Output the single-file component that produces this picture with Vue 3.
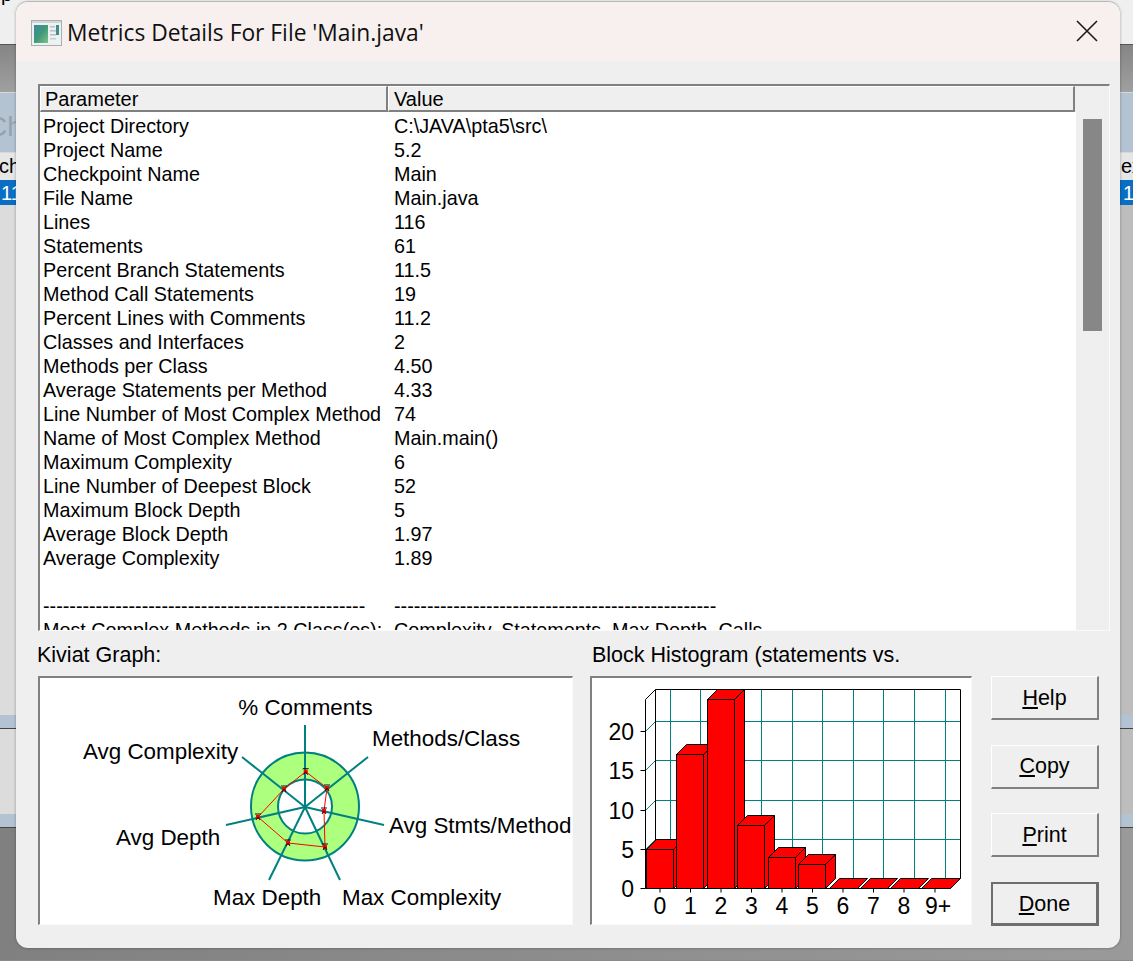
<script setup>
const rows = [
  ['Project Directory', 'C:\\JAVA\\pta5\\src\\'],
  ['Project Name', '5.2'],
  ['Checkpoint Name', 'Main'],
  ['File Name', 'Main.java'],
  ['Lines', '116'],
  ['Statements', '61'],
  ['Percent Branch Statements', '11.5'],
  ['Method Call Statements', '19'],
  ['Percent Lines with Comments', '11.2'],
  ['Classes and Interfaces', '2'],
  ['Methods per Class', '4.50'],
  ['Average Statements per Method', '4.33'],
  ['Line Number of Most Complex Method', '74'],
  ['Name of Most Complex Method', 'Main.main()'],
  ['Maximum Complexity', '6'],
  ['Line Number of Deepest Block', '52'],
  ['Maximum Block Depth', '5'],
  ['Average Block Depth', '1.97'],
  ['Average Complexity', '1.89'],
  ['\u00a0', '\u00a0'],
  ['-------------------------------------------------', '-------------------------------------------------'],
  ['Most Complex Methods in 2 Class(es):', 'Complexity, Statements, Max Depth, Calls'],
]
const stripes = [
  { h: 44, c: '#efefef' }, { h: 1, c: '#555' }, { h: 47, c: 'linear-gradient(#858585, #a0a0a0)' }, { h: 1, c: '#d8d8d8' },
  { h: 59, c: '#b4c3d2' }, { h: 1, c: '#d8d8d8' }, { h: 27, c: '#e6e6e6' },
  { h: 25, c: '#0a6fc2' }, { h: 510, c: 'linear-gradient(90deg, #dcdcdc, #bdbdbd)' }, { h: 13, c: '#b4c3d2' }, { h: 1, c: '#444' },
  { h: 85, c: 'linear-gradient(90deg, #dcdcdc, #bdbdbd)' }, { h: 13, c: '#b4c3d2' }, { h: 1, c: '#444' }, { h: 132, c: 'linear-gradient(90deg, #808080, #9a9a9a)' },
]
const center = [305, 807]
const spokes = [[305, 725], [368, 757], [384, 825], [340, 880], [269, 880], [226, 825], [242, 757]]
const poly = [[305.7, 771.7], [327, 788], [324, 811], [325, 847], [288, 843], [258, 817], [284, 789]]
const polyPts = poly.map(p => p.join(',')).join(' ')
const kLabels = [
  { t: '% Comments', x: 305.5, y: 715, a: 'middle' },
  { t: 'Methods/Class', x: 372, y: 746, a: 'start' },
  { t: 'Avg Stmts/Method', x: 389, y: 833, a: 'start' },
  { t: 'Max Complexity', x: 342, y: 905, a: 'start' },
  { t: 'Max Depth', x: 213, y: 905, a: 'start' },
  { t: 'Avg Depth', x: 116, y: 845, a: 'start' },
  { t: 'Avg Complexity', x: 83, y: 759, a: 'start' },
]
const gridX = [670.5, 700.5, 731, 761.5, 792.5, 822.5, 853.5, 883.5, 914.5, 945.5]
const gridY = [721.5, 760.5, 800.5, 839.5]
const yAxis = [
  { t: '20', y: 731.5 }, { t: '15', y: 770.5 }, { t: '10', y: 810.5 }, { t: '5', y: 849.5 }, { t: '0', y: 888.5 },
]
const bars = [
  [646.5, 673.5, 849.5], [676.5, 703.5, 754.5], [707.5, 734.5, 699.5], [737.5, 764.5, 825.5],
  [768.5, 795.5, 857.5], [798.5, 825.5, 864.5],
]
const flats = [[829.5, 857.5], [860.5, 887.5], [890.5, 918.5], [921.5, 950.5]]
const xAxis = [
  { t: '0', x: 660 }, { t: '1', x: 690.5 }, { t: '2', x: 721 }, { t: '3', x: 751.5 }, { t: '4', x: 782 },
  { t: '5', x: 812.5 }, { t: '6', x: 843 }, { t: '7', x: 873.5 }, { t: '8', x: 904 }, { t: '9+', x: 938 },
]
const ticks = [660, 690.5, 721, 751.5, 782, 812.5, 843, 873.5, 904, 935]
const buttons = [
  { k: 'H', r: 'elp' }, { k: 'C', r: 'opy' }, { k: 'P', r: 'rint' }, { k: 'D', r: 'one', def: true },
]
</script>

<template>
  <div class="desktop">
    <div class="backdrop">
      <div v-for="(s, i) in stripes" :key="i" :style="{ height: s.h + 'px', background: s.c }"></div>
    </div>
    <span class="peek top-p">p</span>
    <span class="peek ch-big">Ch</span>
    <span class="peek ch-small">ch</span>
    <span class="peek one-l">11</span>
    <span class="peek ex">ex</span>
    <span class="peek one-r">1</span>

    <section class="dialog">
      <header class="titlebar">
        <svg class="app-icon" width="31" height="26" viewBox="0 0 31 26">
          <defs>
            <linearGradient id="ig" x1="0" y1="0" x2="1" y2="1">
              <stop offset="0" stop-color="#3d86a6" />
              <stop offset="0.5" stop-color="#3f9a78" />
              <stop offset="1" stop-color="#7fc08c" />
            </linearGradient>
          </defs>
          <rect x="0.5" y="0.5" width="30" height="25" fill="#eef1f1" stroke="#a6b0b0" />
          <rect x="1" y="1" width="29" height="2" fill="#cfd6d6" />
          <rect x="3" y="5" width="14" height="18" fill="url(#ig)" />
          <rect x="19" y="6" width="5" height="1.5" fill="#b8c0c0" />
          <rect x="19" y="10" width="6" height="1.5" fill="#b8c0c0" />
          <rect x="19" y="14" width="6" height="1.5" fill="#b8c0c0" />
          <rect x="19" y="18" width="6" height="1.5" fill="#c8d0d0" />
          <rect x="25" y="5" width="3" height="10" fill="#3f8f88" />
        </svg>
        <h1 class="title">Metrics Details For File 'Main.java'</h1>
        <svg class="close" width="22" height="22" viewBox="0 0 22 22">
          <path d="M1 1 L21 21 M21 1 L1 21" stroke="#1a1a1a" stroke-width="1.6" fill="none" />
        </svg>
      </header>

      <div class="content">
        <div class="list sunken">
          <div class="list-main">
            <div class="list-head">
              <div class="hcell h1">Parameter</div>
              <div class="hcell h2">Value</div>
            </div>
            <div class="list-body">
              <div v-for="(r, i) in rows" :key="i" class="row">
                <span class="c1">{{ r[0] }}</span>
                <span class="c2">{{ r[1] }}</span>
              </div>
            </div>
          </div>
          <div class="scroll"><div class="thumb"></div></div>
        </div>

        <div class="bottom">
          <div class="kiviat-col">
            <div class="caption">Kiviat Graph:</div>
            <div class="chart sunken">
              <svg class="plot" width="535" height="249" viewBox="38 676 535 249">
                <circle :cx="center[0]" cy="806.5" r="40.5" fill="none" stroke="#adff7e" stroke-width="27" />
                <circle :cx="center[0]" cy="806.5" r="54" fill="none" stroke="#008080" stroke-width="2" />
                <circle :cx="center[0]" cy="806.5" r="27" fill="none" stroke="#008080" stroke-width="2" />
                <line v-for="(s, i) in spokes" :key="i" :x1="center[0]" :y1="center[1]" :x2="s[0]" :y2="s[1]" stroke="#008080" stroke-width="2" />
                <polygon :points="polyPts" fill="none" stroke="#ff0000" stroke-width="1" />
                <g v-for="(p, i) in poly" :key="'m' + i">
                  <rect :x="p[0] - 2" :y="p[1] - 2" width="4" height="4" fill="#ff0000" />
                  <path :d="`M${p[0] - 3} ${p[1] - 3} h6 M${p[0] - 2} ${p[1] + 3} l2 -3 l2 3`" stroke="#111" stroke-width="1" fill="none" />
                </g>
                <text v-for="l in kLabels" :key="l.t" :x="l.x" :y="l.y" :text-anchor="l.a" class="chart-text">{{ l.t }}</text>
              </svg>
            </div>
          </div>

          <div class="hist-col">
            <div class="caption cap2">Block Histogram (statements vs.</div>
            <div class="chart sunken">
              <svg class="plot" width="382" height="249" viewBox="590 676 382 249">
                <line v-for="x in gridX" :key="'gx' + x" :x1="x" y1="689.5" :x2="x" y2="878.5" stroke="#008080" />
                <line v-for="y in gridY" :key="'gy' + y" x1="655.5" :y1="y" x2="960.5" :y2="y" stroke="#008080" />
                <line v-for="a in yAxis.slice(0, 4)" :key="'dg' + a.t" x1="645.5" :y1="a.y" x2="655.5" :y2="a.y - 10" stroke="#008080" />
                <path d="M645.5 888.5 V699.5 L655.5 689.5 H960.5 V878.5 M655.5 689.5 V850" fill="none" stroke="#000" />
                <line v-for="a in yAxis" :key="'ty' + a.t" x1="640.5" :y1="a.y" x2="645.5" :y2="a.y" stroke="#000" />
                <line v-for="t in ticks" :key="'tx' + t" :x1="t" y1="888.5" :x2="t" y2="892.5" stroke="#000" />
                <path d="M645.5 888.5 H950.5" stroke="#000" />
                <g v-for="(b, i) in flats" :key="'f' + i">
                  <path :d="`M${b[0]} 888.5 L${b[0] + 10} 878.5 H${b[1] + 10} L${b[1]} 888.5 Z`" fill="#ff0000" stroke="#000" />
                </g>
                <g v-for="(b, i) in bars" :key="'b' + i">
                  <path :d="`M${b[1]} ${b[2]} L${b[1] + 10} ${b[2] - 10} V878.5 L${b[1]} 888.5 Z`" fill="#ff0000" stroke="#000" />
                  <path :d="`M${b[0]} ${b[2]} L${b[0] + 10} ${b[2] - 10} H${b[1] + 10} L${b[1]} ${b[2]} Z`" fill="#ff0000" stroke="#000" />
                  <rect :x="b[0]" :y="b[2]" :width="b[1] - b[0]" :height="888.5 - b[2]" fill="#ff0000" stroke="#000" />
                </g>
                <text v-for="a in yAxis" :key="'yl' + a.t" x="634" :y="a.y + 8" text-anchor="end" class="chart-text num">{{ a.t }}</text>
                <text v-for="a in xAxis" :key="'xl' + a.t" :x="a.x" y="914" text-anchor="middle" class="chart-text num">{{ a.t }}</text>
              </svg>
            </div>
          </div>

          <div class="actions">
            <button v-for="b in buttons" :key="b.k" class="btn" :class="{ def: b.def }" type="button"><u>{{ b.k }}</u>{{ b.r }}</button>
          </div>
        </div>
      </div>
    </section>
  </div>
</template>

<style>
html, body { margin: 0; background: #8a8a8a; overflow: hidden; }
</style>

<style scoped>
.desktop {
  position: relative;
  width: 1133px;
  height: 961px;
  overflow: hidden;
  font-family: "Liberation Sans", Arial, sans-serif;
  color: #000;
}
.backdrop { position: absolute; inset: 0; }
.peek { position: absolute; font-size: 20px; line-height: 24px; }
.top-p { left: 1px; top: -18px; }
.ch-big { left: -13px; top: 111px; font-size: 28px; line-height: 32px; color: #98a1aa; }
.ch-small { left: -1px; top: 154px; }
.one-l { left: 1px; top: 181px; color: #fff; }
.ex { left: 1121px; top: 154px; }
.one-r { left: 1123px; top: 181px; color: #fff; }

.dialog {
  position: absolute;
  left: 16px;
  top: 2px;
  width: 1104px;
  height: 946px;
  background: #efefef;
  border-radius: 12px;
  overflow: hidden;
  box-shadow: 0 -1px 0 #b8b8b8, 0 0 3px rgba(0, 0, 0, .35);
  display: flex;
  flex-direction: column;
}
.titlebar {
  height: 59px;
  flex: none;
  background: #f8f0ee;
  display: flex;
  align-items: center;
  padding: 2px 22px 0 15px;
  box-sizing: border-box;
}
.app-icon { flex: none; margin-right: 6px; }
.title {
  flex: 1;
  margin: 0 0 0 -1px;
  font: 400 22.8px "Open Sans", sans-serif;
  color: #111;
  white-space: nowrap;
}
.close { flex: none; margin-top: -4px; }

.content { padding: 23px 10px 0 22px; display: flex; flex-direction: column; }
.sunken {
  box-sizing: border-box;
  border-top: 2px solid #808080;
  border-left: 2px solid #808080;
  border-right: 1px solid #fafafa;
  border-bottom: 1px solid #fafafa;
}
.list {
  height: 547px;
  display: flex;
  overflow: hidden;
}
.list-main { width: 1036px; flex: none; display: flex; flex-direction: column; min-height: 0; }
.list-head { display: flex; height: 26px; flex: none; box-sizing: border-box; }
.hcell {
  box-sizing: border-box;
  font-size: 20px;
  background: #efefef;
  border-top: 1px solid #fff;
  border-left: 1px solid #fff;
  border-right: 2px solid #808080;
  border-bottom: 2px solid #808080;
  padding-left: 4px;
  line-height: 25px;
}
.h1 { width: 348px; }
.h2 { width: 687px; padding-left: 5px; }
.list-body { flex: 1; background: #fff; overflow: hidden; min-height: 0; padding-top: 2px; width: 1036px; }
.row { display: flex; height: 24px; font-size: 19.75px; line-height: 24px; white-space: nowrap; }
.c1 { width: 354px; padding-left: 3px; box-sizing: border-box; flex: none; }
.c2 { flex: 1; }
.scroll { flex: 1; padding: 33px 7px 0 7px; background: #efefef; }
.thumb { width: 19px; height: 212px; background: #878787; }

.bottom { display: flex; position: relative; margin-top: 8px; }
.kiviat-col { width: 535px; flex: none; margin-right: 17px; }
.hist-col { width: 382px; flex: none; margin-right: 19px; }
.caption { font-size: 21.5px; line-height: 28px; height: 37px; padding-top: 2px; box-sizing: border-box; margin-left: -1px; white-space: nowrap; }
.cap2 { margin-left: 2px; }
.chart { height: 249px; background: #fff; position: relative; overflow: hidden; }
.plot { position: absolute; left: -2px; top: -2px; display: block; }
.chart-text { font-family: "Liberation Sans", Arial, sans-serif; font-size: 22.4px; fill: #000; }
.num { font-size: 23px; }

.actions { padding-top: 37px; display: flex; flex-direction: column; gap: 24.67px; width: 108px; }
.btn {
  width: 108px;
  height: 44px;
  box-sizing: border-box;
  background: #efefef;
  font: 400 21.5px/1 "Liberation Sans", Arial, sans-serif;
  color: #000;
  padding: 2px 0 0;
  border-style: solid;
  border-width: 1px 2px 2px 1px;
  border-color: #fff #808080 #808080 #fff;
}
.btn.def { border: 2px solid #6e6e6e; border-bottom-width: 3px; border-right-width: 3px; }
</style>
